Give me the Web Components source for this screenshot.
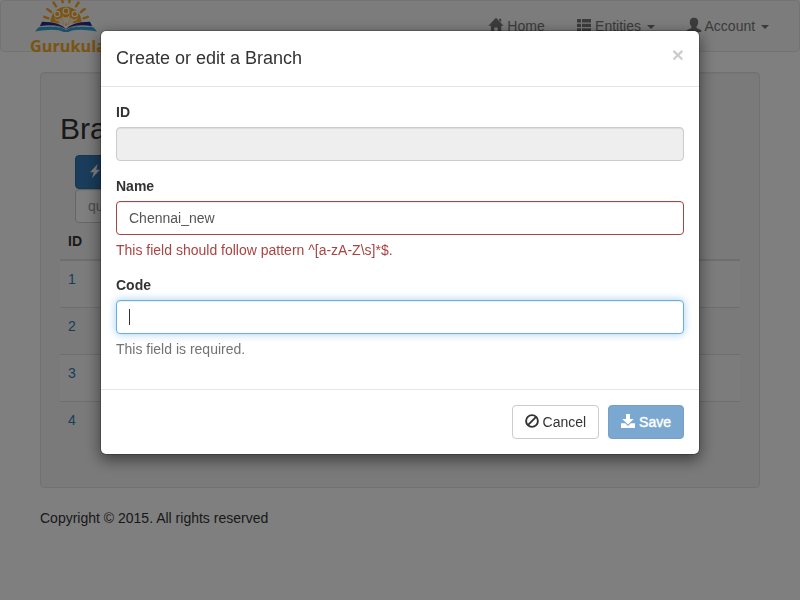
<!DOCTYPE html>
<html lang="en">
<head>
<meta charset="utf-8">
<title>Gurukula</title>
<style>
html,body{margin:0;height:100%;overflow:hidden}
body{background:#fff;color:#333;font:14px/20px "Liberation Sans",Arial,sans-serif}
</style>
</head>
<body>
<gk-navbar>
  <gk-nav-item icon="home">Home</gk-nav-item>
  <gk-nav-item icon="list" menu>Entities</gk-nav-item>
  <gk-nav-item icon="user" menu>Account</gk-nav-item>
</gk-navbar>
<gk-branches>Branches</gk-branches>
<gk-footer>Copyright © 2015. All rights reserved</gk-footer>
<gk-modal>
  <span slot="title">Create or edit a Branch</span>
  <gk-field label="ID" state="disabled"></gk-field>
  <gk-field label="Name" state="error" value="Chennai_new" help="This field should follow pattern ^[a-zA-Z\s]*$."></gk-field>
  <gk-field label="Code" state="focus" help="This field is required."></gk-field>
  <gk-button slot="footer" icon="ban">Cancel</gk-button>
  <gk-button slot="footer" icon="save" primary disabled>Save</gk-button>
</gk-modal>
<script>
const define = (name, render) => customElements.define(name, class extends HTMLElement {
  connectedCallback() {
    if (!this.shadowRoot) this.attachShadow({mode: 'open'}).innerHTML = render(this);
  }
});

const icons = {
  home: '<path d="M7-.2 14.600 7.800H12.300V14H8.700V9.400H5.300V14H1.900V7.800H-.6ZM10 .8h2.200v3.500L10 2Z"/>',
  list: '<path d="M0 1h4v3.400H0zM5 1h9v3.400H5zM0 5.700h4V9H0zM5 5.700h9V9H5zM0 10.300h4v3.400H0zM5 10.300h9v3.400H5z"/>',
  user: '<path d="M7-.2c2.600 0 4.200 1.500 4.200 4.400 0 1.900-.8 3.400-1.700 4.200v1.300c.3.500 1.300.8 2.400 1.300 1.600.6 2.400 1.100 2.400 2.200v.8H-.3v-.8c0-1.100.8-1.600 2.400-2.200 1.100-.5 2.100-.8 2.400-1.300V8.400C3.600 7.600 2.800 6.100 2.800 4.200 2.800 1.300 4.400-.2 7-.2Z"/>',
  ban: '<circle cx="7" cy="7" r="5.900" fill="none" stroke="currentColor" stroke-width="1.900"/><path d="M2.900 11.100 11.100 2.900" stroke="currentColor" stroke-width="1.900"/>',
  save: '<path d="M5 0h4v5h3.800L7 10.500 1.200 5H5zM0 9.300h4.200L7 11.900 9.800 9.300H14V14H0z"/>',
  flash: '<path d="M9.700 0 2 8.200h3.800L4 14l8.200-8.200H8.300z"/>'
};

define('gk-icon', el => `
<style>
:host{display:inline-block;width:14px;height:14px;position:relative;top:1px;line-height:1}
svg{display:block;overflow:visible}
</style>
<svg width="14" height="14" viewBox="0 0 14 14" fill="currentColor">${icons[el.getAttribute('name')]}</svg>`);

define('gk-logo', () => `
<style>
:host{display:block;width:90px;height:56px}
svg{display:block}
text{font:700 16.300px "Open Sans",sans-serif}
</style>
<svg width="90" height="56" viewBox="0 0 90 56">
  <path d="M14.200 16.800l4.200 1.500M17.300 9l3.800 3M23.500 2.500l2.500 3.800M32-1l.7 3.200M40-1l-.7 3.200M48.500 2.500L46 6.300M54.700 9l-3.800 3M57.800 16.800l-4.200 1.500" stroke="#f7a823" stroke-width="2.400" stroke-linecap="round"/>
  <path d="M20.500 22.300a15.500 15.500 0 0 1 31 0q-8 0-13.500 3.200h-4q-5.500-3.200-13.500-3.200Z" fill="#f7a823"/>
  <path d="M24 17q2.500 3.500 5 2l3.500-2 1 8h-3l-2-3.500Q25 21 24 17ZM48 17q-2.500 3.500-5 2l-3.500-2-1 8h3l2-3.500Q47 21 48 17Z" fill="#fff" opacity=".75"/>
  <path d="M31.800 13.500Q33 18 36 17.500T40.200 13.500L38.800 21l-.6 5h-1l-1.200-4-1.200 4h-1l-.6-5Z" fill="#fff" opacity=".85"/>
  <g fill="#f7a823" stroke="#fff" stroke-width="1.200"><circle cx="27.200" cy="14" r="2.700"/><circle cx="36" cy="11" r="3"/><circle cx="44.800" cy="14" r="2.700"/></g>
  <path d="M12 21.800q17-.2 24 7.200 7-7.400 24-7.200l2.500 5Q46 23.500 36 31 26 23.500 9.500 26.800Z" fill="#2b2c86"/>
  <path d="M8.500 27.300Q28 24.500 36 30.300q8-5.800 27.500-3L67 31.500Q46 27.700 38.500 32h-5Q26 27.700 5 31.500Z" fill="#2ea3d4"/>
  <path d="M8.500 26.700Q28 23.700 36 29.700q8-6 27.500-3" fill="none" stroke="#fff" stroke-width=".8"/>
  <text x="0" y="52.300" fill="#f7a823" textLength="76" lengthAdjust="spacingAndGlyphs">Gurukula</text>
</svg>`);

define('gk-navbar', () => `
<style>
:host{display:flex;justify-content:space-between;box-sizing:border-box;height:52px;border:1px solid #e7e7e7;border-radius:4px;background:#f8f8f8;padding:0 15px 0 29px}
gk-logo{margin-top:-1px}
nav{display:flex;gap:2.500px}
</style>
<gk-logo></gk-logo><nav><slot></slot></nav>`);

define('gk-nav-item', el => `
<style>
:host{display:block;padding:15px;color:#777;white-space:nowrap}
.caret{display:inline-block;margin-left:2px;vertical-align:middle;border-top:4px solid;border-left:4px solid transparent;border-right:4px solid transparent}
</style>
<gk-icon name="${el.getAttribute('icon')}"></gk-icon> <slot></slot>${el.hasAttribute('menu') ? ' <span class="caret"></span>' : ''}`);

define('gk-button', el => `
<style>
:host{display:inline-block;box-sizing:border-box;height:34px;padding:6px 12px;border:1px solid #ccc;border-radius:4px;background:#fff;color:#333;white-space:nowrap}
:host([primary]){background:#337ab7;border-color:#2e6da4;color:#fff;-webkit-text-stroke:.4px #fff}
:host([disabled]){opacity:.65}
</style>
<gk-icon name="${el.getAttribute('icon')}"></gk-icon> <slot></slot>`);

define('gk-branches', () => `
<style>
:host{display:block;box-sizing:border-box;margin:20px 40px;padding:19px;min-height:416px;border:1px solid #e3e3e3;border-radius:4px;background:#f5f5f5;box-shadow:inset 0 1px 1px rgba(0,0,0,.05)}
h2{margin:20px 0 10px;font-size:30px;line-height:33px;font-weight:500}
.tools{display:flex;flex-direction:column;align-items:flex-start;padding:0 15px}
gk-button{width:170px}
.query{box-sizing:border-box;width:196px;height:34px;padding:6px 12px;border:1px solid #ccc;border-radius:4px;background:#fff;color:#999;box-shadow:inset 0 1px 1px rgba(0,0,0,.075)}
.head{padding:8px;font-weight:700;border-bottom:2px solid #ddd}
.row{box-sizing:border-box;height:47px;padding:8px;border-bottom:1px solid #ddd;color:#337ab7}
.row:nth-child(even){background:#f9f9f9}
.row:last-child{border:0}
</style>
<h2><slot></slot></h2>
<div class="tools"><gk-button icon="flash" primary></gk-button><div class="query">query</div></div>
<div class="table"><div class="head">ID</div>${[1,2,3,4].map(n => `<div class="row">${n}</div>`).join('')}</div>`);

define('gk-footer', () => `
<style>:host{display:block;padding:0 40px}</style><slot></slot>`);

define('gk-field', el => {
  const help = el.getAttribute('help');
  const state = el.getAttribute('state');
  return `
<style>
:host{display:block;margin-bottom:15px}
.label{margin-bottom:5px;font-weight:700}
.control{box-sizing:border-box;height:34px;padding:6px 12px;border:1px solid #ccc;border-radius:4px;background:#fff;color:#555;box-shadow:inset 0 1px 1px rgba(0,0,0,.075)}
.disabled{background:#eee}
.error{border-color:#a94442}
.focus{border-color:#66afe9;box-shadow:inset 0 1px 1px rgba(0,0,0,.075),0 0 8px rgba(102,175,233,.6)}
.cursor{width:1px;height:16px;margin-top:2px;background:#333}
.help{margin-top:5px;color:#737373}
.error + .help{color:#a94442}
</style>
<div class="label">${el.getAttribute('label')}</div>
<div class="control ${state}">${state === 'focus' ? '<div class="cursor"></div>' : el.getAttribute('value') || ''}</div>
${help ? `<div class="help">${help}</div>` : ''}`;
});

define('gk-modal', () => `
<style>
:host{position:fixed;inset:0;background:rgba(0,0,0,.5)}
.dialog{box-sizing:border-box;width:600px;height:425px;margin:30px auto;border:1px solid rgba(0,0,0,.2);border-radius:6px;background:#fff;background-clip:padding-box;box-shadow:0 5px 15px rgba(0,0,0,.5)}
header{display:flex;justify-content:space-between;box-sizing:border-box;height:56px;padding:15px;border-bottom:1px solid #e5e5e5;font-size:18px;line-height:25px}
.close{margin-top:-2px;font-size:21px;line-height:21px;font-weight:700;color:#000;opacity:.2}
.body{display:flow-root;padding:15px}
footer{display:flex;justify-content:flex-end;gap:9px;padding:15px;border-top:1px solid #e5e5e5}
</style>
<div class="dialog">
  <header><slot name="title"></slot><span class="close">×</span></header>
  <div class="body"><slot></slot></div>
  <footer><slot name="footer"></slot></footer>
</div>`);
</script>
</body>
</html>
